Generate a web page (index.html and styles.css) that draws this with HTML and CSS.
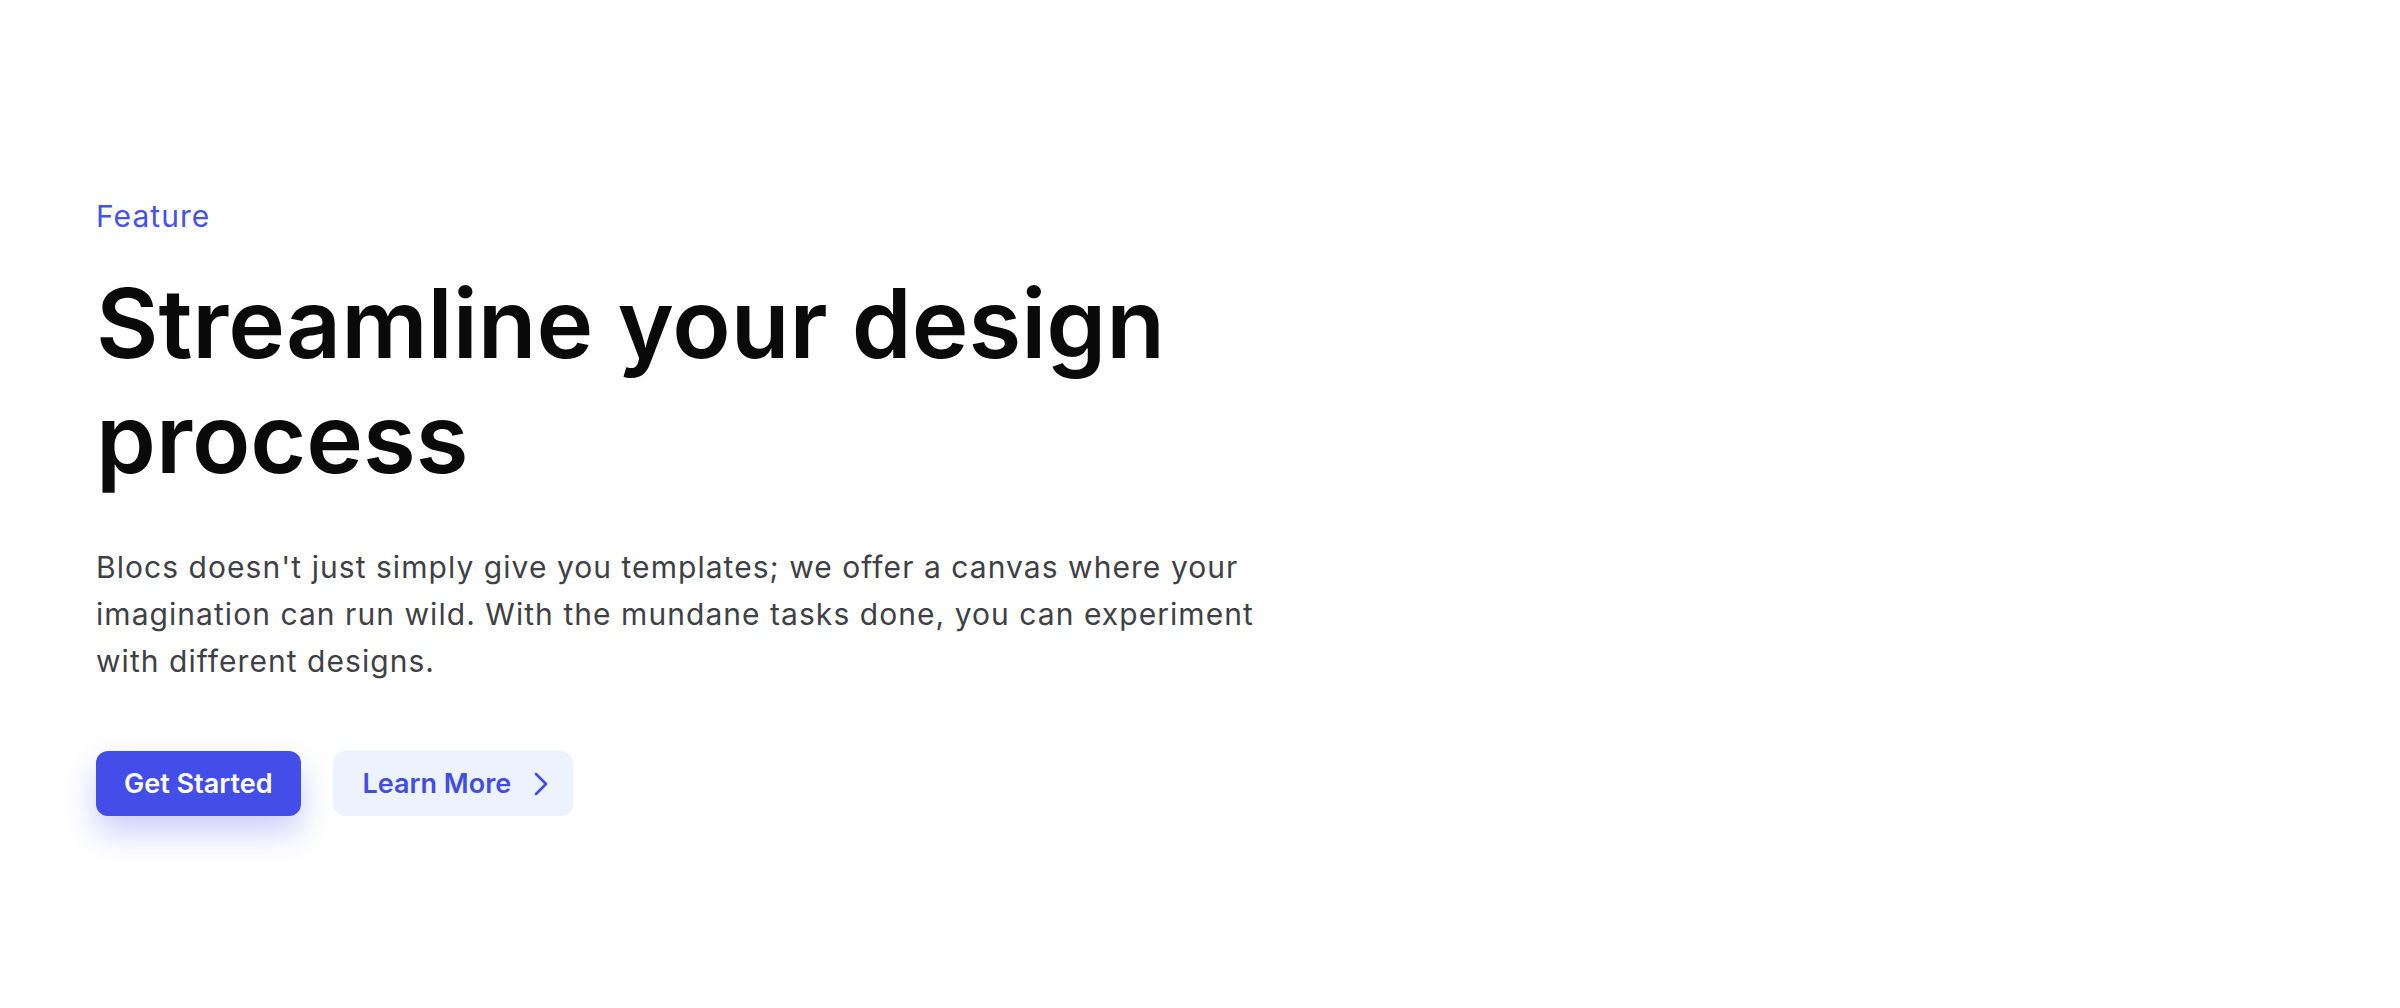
FILE: index.html
```html
<!DOCTYPE html>
<html lang="en">
<head>
<meta charset="utf-8">
<title>Feature</title>
<link rel="stylesheet" href="styles.css">
</head>
<body>
<section class="hero">
  <div class="content">
    <p class="eyebrow">Feature</p>
    <h1 class="title">Streamline your design process</h1>
    <p class="lead">Blocs doesn't just simply give you templates; we offer a canvas where your imagination can run wild. With the mundane tasks done, you can experiment with different designs.</p>
    <div class="actions">
      <a class="btn btn-primary" href="#">Get Started</a>
      <a class="btn btn-secondary" href="#">Learn More
        <svg class="chev" viewBox="0 0 24 24" fill="none" stroke="currentColor" stroke-width="2" stroke-linecap="round" stroke-linejoin="round"><path d="m8.25 4.5 7.5 7.5-7.5 7.5"/></svg>
      </a>
    </div>
  </div>
</section>
</body>
</html>
```
FILE: styles.css
```css
* { box-sizing: border-box; }
html, body { margin: 0; padding: 0; background: #ffffff; }
body { font-family: Inter, "Noto Sans", sans-serif; }

.hero {
  width: 2400px;
  height: 1008px;
  padding: 194px 96px 0;
}
.content { max-width: 1200px; }

.eyebrow {
  margin: 0;
  font-size: 30px;
  line-height: 45px;
  color: #4650eb;
  font-weight: 400;
  letter-spacing: 0.035em;
}

.title {
  margin: 27px 0 0;
  font-size: 96px;
  line-height: 115px;
  font-weight: 600;
  color: #0a0a0a;
  max-width: 1150px;
}

.lead {
  margin: 48px 0 0;
  font-size: 30px;
  line-height: 47px;
  letter-spacing: 0.035em;
  color: #3f3f46;
  max-width: 1190px;
}

.actions {
  display: flex;
  gap: 32px;
  margin-top: 66px;
}

.btn {
  display: inline-flex;
  align-items: center;
  height: 65px;
  border-radius: 12px;
  font-size: 27px;
  font-weight: 600;
  text-decoration: none;
}
.btn-primary {
  padding: 0 28px;
  background: #434ee9;
  color: #ffffff;
  box-shadow: 0 16px 32px rgba(67, 78, 233, 0.28);
}
.btn-secondary {
  padding: 0 16px 0 30px;
  background: #edf3fe;
  color: #434ee0;
  gap: 14px;
}
.chev { width: 32px; height: 32px; flex: none; }
```
